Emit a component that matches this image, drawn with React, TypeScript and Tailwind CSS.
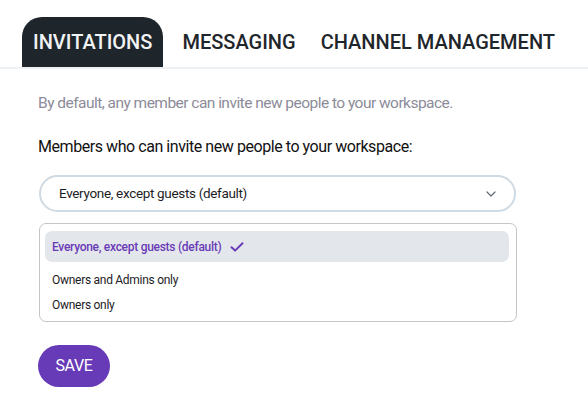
import React, { useState } from 'react';

const tabs = ['INVITATIONS', 'MESSAGING', 'CHANNEL MANAGEMENT'];

const options = [
  'Everyone, except guests (default)',
  'Owners and Admins only',
  'Owners only',
];

const App = () => {
  const [active, setActive] = useState(0);
  const [selected, setSelected] = useState(0);

  return (
    <div className="w-[588px] h-[409px] bg-white font-['Roboto',sans-serif] text-[#1d1d1f] overflow-hidden">
      {/* Tabs */}
      <div className="flex items-end gap-[3px] pl-[22px] pt-[17px] border-b-2 border-[#eef1f4]">
        {tabs.map((tab, i) => (
          <button
            key={tab}
            onClick={() => setActive(i)}
            className={`h-[50px] px-[11px] rounded-t-[20px] text-[20px] font-medium leading-none ${
              i === active ? 'bg-[#1f262b] text-[#f1f3f5] mr-[5px]' : 'text-[#1f262b]'
            }`}
          >
            {tab}
          </button>
        ))}
      </div>

      {/* Content */}
      <div className="pl-[38px] pr-[72px]">
        <p className="mt-[24px] text-[15.5px] tracking-[-0.53px] leading-[20px] text-[#8c8b99]">
          By default, any member can invite new people to your workspace.
        </p>
        <p className="mt-[24px] text-[16px] tracking-[-0.44px] leading-[20px] text-[#111]">
          Members who can invite new people to your workspace:
        </p>

        <div className="mt-[18px] ml-px h-[37px] w-[477px] rounded-full border-2 border-[#cfdae3] flex items-center justify-between pl-[18px] pr-[16px]">
          <span className="text-[13.5px] tracking-[-0.33px] text-[#1d1d1f]">{options[selected]}</span>
          <svg width="10" height="6" viewBox="0 0 10 6" fill="none" className="mr-[2px]">
            <path d="M1 1l4 4 4-4" stroke="#5f6b76" strokeWidth="1.2" strokeLinecap="round" strokeLinejoin="round" />
          </svg>
        </div>

        <div className="mt-[11px] ml-px w-[478px] rounded-[7px] border border-[#c4c4c9] pl-[5px] pr-[7px] pt-[7px] pb-[4px]">
          {options.map((opt, i) => (
            <div
              key={opt}
              onClick={() => setSelected(i)}
              className={`flex items-center gap-[9px] px-[7px] text-[12px] tracking-[-0.28px] cursor-pointer ${
                i === selected
                  ? 'h-[31px] mb-[5px] rounded-[7px] bg-[#e3e7eb] text-[#6a3bb7] font-medium'
                  : 'h-[25px] text-[#1d1d1f]'
              }`}
            >
              <span>{opt}</span>
              {i === selected && (
                <svg width="14" height="10" viewBox="0 0 14 10" fill="none">
                  <path d="M1.5 5.2l3.6 3.4L12.5 1.3" stroke="#6a3bb7" strokeWidth="2" strokeLinecap="round" strokeLinejoin="round" />
                </svg>
              )}
            </div>
          ))}
        </div>

        <button className="mt-[23px] h-[42px] w-[72px] rounded-full bg-[#673ab7] text-white text-[16px] tracking-[-0.4px] leading-none">
          SAVE
        </button>
      </div>
    </div>
  );
};

export default App;
